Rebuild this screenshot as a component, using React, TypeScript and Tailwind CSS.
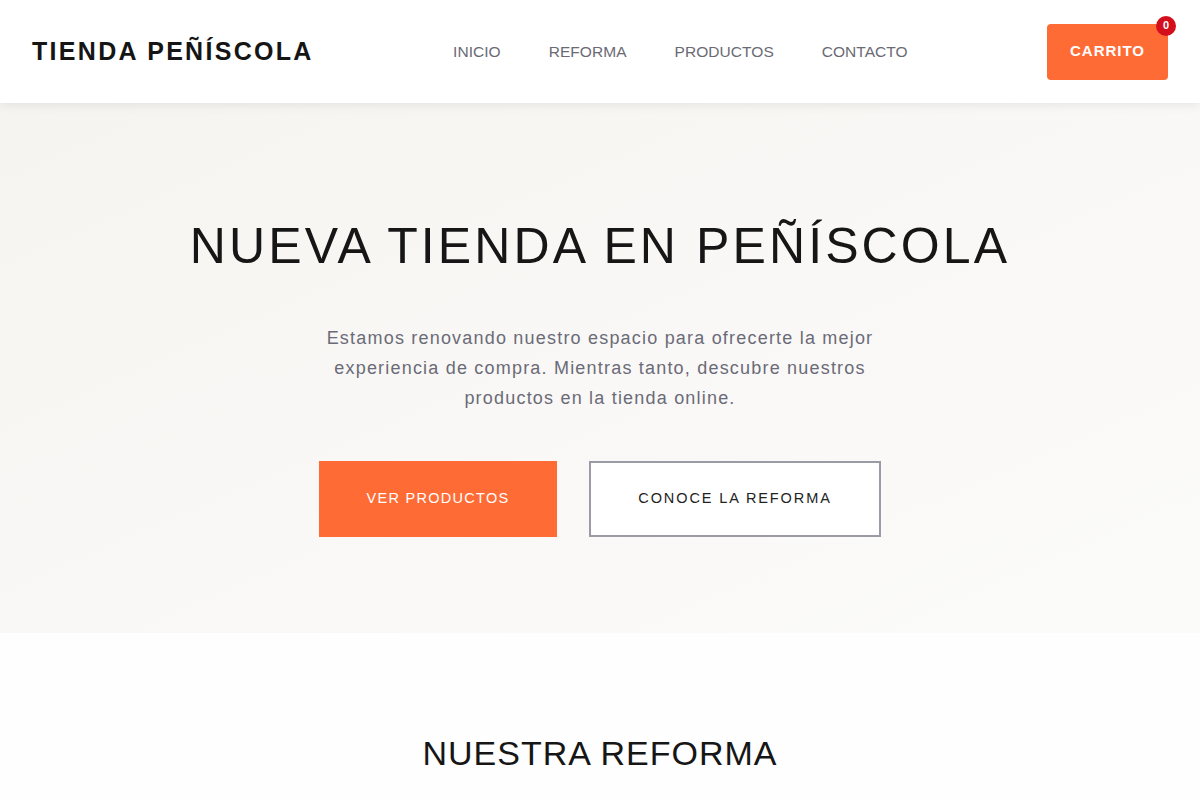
// landing page: tienda peñíscola
const font = "font-['Liberation_Sans',Arial,sans-serif]"

const navLinks = ["INICIO", "REFORMA", "PRODUCTOS", "CONTACTO"]

function Header() {
  return (
    <header className="relative z-10 h-[103px] bg-white shadow-[0_2px_10px_rgba(0,0,0,0.08)] flex items-center justify-between px-[32px]">
      <div className="text-[25px] font-bold tracking-[2.3px] text-[#151515]">
        TIENDA PEÑÍSCOLA
      </div>

      <nav className="flex items-center gap-[48px] text-[15.5px] tracking-[0.05px] text-[#6a6a74]">
        {navLinks.map((l) => (
          <a key={l} href="#">
            {l}
          </a>
        ))}
      </nav>

      <div className="relative">
        <button className="w-[121px] h-[56px] rounded-[4px] bg-[#ff6b35] text-white text-[15px] font-bold tracking-[1px]">
          CARRITO
        </button>
        <span className="absolute -top-[8px] -right-[8px] w-[20px] h-[20px] rounded-full bg-[#d40f1c] text-white text-[11px] font-bold flex items-center justify-center">
          0
        </span>
      </div>
    </header>
  )
}

export default function App() {
  return (
    <div className={`${font} min-h-screen bg-[#fefefe]`}>
      <Header />

      {/* Hero */}
      <section className="h-[530px] bg-gradient-to-br from-[#f5f4f0] via-[#f9f8f6] to-[#fbfbf9] flex flex-col items-center pt-[118px]">
        <h1 className="text-[50px] leading-none font-medium tracking-[3.1px] text-[#161616]">
          NUEVA TIENDA EN PEÑÍSCOLA
        </h1>

        <p className="mt-[52px] w-[560px] text-center text-[18px] leading-[30px] tracking-[1.2px] text-[#6b6b78]">
          Estamos renovando nuestro espacio para ofrecerte la mejor experiencia de compra. Mientras tanto, descubre nuestros productos en la tienda online.
        </p>

        <div className="mt-[48px] flex gap-[32px]">
          <button className="w-[238px] h-[76px] bg-[#ff6b35] text-white text-[14.5px] font-medium tracking-[1.3px]">
            VER PRODUCTOS
          </button>
          <button className="w-[292px] h-[76px] border-2 border-[#9b9ba6] bg-white text-[#222] text-[14.5px] font-medium tracking-[1.9px]">
            CONOCE LA REFORMA
          </button>
        </div>
      </section>

      {/* Reforma */}
      <section className="bg-[#fefefe] pt-[103px] pb-[40px] flex justify-center">
        <h2 className="text-[34px] leading-none font-medium tracking-[1px] text-[#161616]">
          NUESTRA REFORMA
        </h2>
      </section>
    </div>
  )
}
